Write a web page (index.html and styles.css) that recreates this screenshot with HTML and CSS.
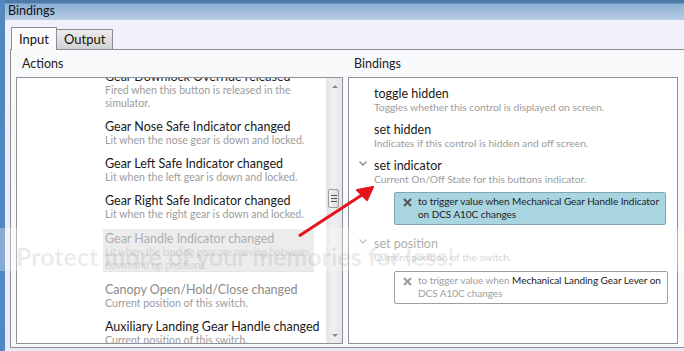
FILE: index.html
```html
<!DOCTYPE html>
<html lang="en">
<head>
  <meta charset="UTF-8">
  <title>Bindings</title>
  <link rel="stylesheet" href="styles.css">
</head>
<body>
  <div class="window">
    <div class="titlebar">Bindings</div>
    <div class="client">
      <div class="tabs">
        <div class="tab active">Input</div>
        <div class="tab">Output</div>
      </div>
      <div class="tabPanel">
        <div class="column">
          <div class="header">Actions</div>
          <div class="listbox">
            <div class="actionList">
              <div class="action">
                <div class="title">Gear Downlock Override released</div>
                <div class="desc">Fired when this button is released in the simulator.</div>
              </div>
              <div class="action">
                <div class="title">Gear Nose Safe Indicator changed</div>
                <div class="desc">Lit when the nose gear is down and locked.</div>
              </div>
              <div class="action">
                <div class="title">Gear Left Safe Indicator changed</div>
                <div class="desc">Lit when the left gear is down and locked.</div>
              </div>
              <div class="action">
                <div class="title">Gear Right Safe Indicator changed</div>
                <div class="desc">Lit when the right gear is down and locked.</div>
              </div>
              <div class="action selected">
                <div class="title">Gear Handle Indicator changed</div>
                <div class="desc">Lit when the landing gear are moving between down and up positions.</div>
              </div>
              <div class="action faded">
                <div class="title">Canopy Open/Hold/Close changed</div>
                <div class="desc">Current position of this switch.</div>
              </div>
              <div class="action">
                <div class="title">Auxiliary Landing Gear Handle changed</div>
                <div class="desc">Current position of this switch.</div>
              </div>
            </div>
            <div class="scrollbar">
              <div class="arrow up"></div>
              <div class="track">
                <div class="thumb"><span></span><span></span><span></span></div>
              </div>
              <div class="arrow down"></div>
            </div>
          </div>
        </div>
        <div class="column">
          <div class="header">Bindings</div>
          <div class="listbox bindingList">
            <div class="binding">
              <div class="title">toggle hidden</div>
              <div class="desc">Toggles whether this control is displayed on screen.</div>
            </div>
            <div class="binding">
              <div class="title">set hidden</div>
              <div class="desc">Indicates if this control is hidden and off screen.</div>
            </div>
            <div class="binding open">
              <svg class="chevron" width="8" height="5" viewBox="0 0 8 5"><polyline points="0.5,0.5 4,4 7.5,0.5" fill="none" stroke="#8a8a8a" stroke-width="1.3"/></svg>
              <div class="title">set indicator</div>
              <div class="desc">Current On/Off State for this buttons indicator.</div>
              <div class="trigger active">
                <svg class="remove" width="9" height="9" viewBox="0 0 9 9"><path d="M1 1 L8 8 M8 1 L1 8" stroke="#555" stroke-width="2"/></svg>
                <div class="triggerText">to trigger value when Mechanical Gear Handle Indicator on DCS A10C changes</div>
              </div>
            </div>
            <div class="binding open faded">
              <svg class="chevron" width="8" height="5" viewBox="0 0 8 5"><polyline points="0.5,0.5 4,4 7.5,0.5" fill="none" stroke="#a8a8a8" stroke-width="1.3"/></svg>
              <div class="title">set position</div>
              <div class="desc">Current position of the switch.</div>
              <div class="trigger">
                <svg class="remove" width="9" height="9" viewBox="0 0 9 9"><path d="M1 1 L8 8 M8 1 L1 8" stroke="#9a9a9a" stroke-width="2"/></svg>
                <div class="triggerText">to trigger value when <b>Mechanical Landing Gear Lever on</b> DCS A10C changes</div>
              </div>
            </div>
          </div>
        </div>
      </div>
    </div>

    <div class="watermark"><span>Protect more of your memories for less!</span></div>
    <svg class="pointer" width="684" height="351" viewBox="0 0 684 351">
      <line x1="299" y1="236" x2="368" y2="191" stroke="#e3141c" stroke-width="3"/>
      <polygon points="373,187 357,190 367,200" fill="#e3141c" stroke="#e3141c" stroke-width="2" stroke-linejoin="round"/>
    </svg>
  </div>
</body>
</html>
```

FILE: styles.css
```css
body{
  margin: 0;
  width: 684px;
  height: 351px;
  overflow: hidden;
  font-family: 'Lato', 'Open Sans', sans-serif;
  background: #eceaf7;
}

.window{
  position: relative;
  height: 351px;
  border-left: 5px solid #5288c0;
  box-sizing: border-box;
}

.titlebar{
  height: 20px;
  line-height: 22px;
  padding-left: 3px;
  font-size: 12.5px;
  color: #111;
  background: linear-gradient(#4d7aa9 0px, #4d7aa9 3px, #8db0d4 4px, #b9cde5 20px);
}

.client{
  padding: 7px 0 0 5px;
  background: linear-gradient(#f2f1fb, #ebe9f8);
}

.tabs{
  display: flex;
  align-items: flex-end;
  padding-left: 2px;
  height: 22px;
}

.tab{
  height: 19px;
  line-height: 19px;
  padding: 0 7px;
  font-size: 13px;
  color: #111;
  border: 1px solid #8a8d96;
  border-bottom: none;
  background: linear-gradient(#ececec, #d2d2d2);
  margin-left: -1px;
}

.tab.active{
  height: 22px;
  line-height: 22px;
  background: #fbfbfc;
  position: relative;
  z-index: 1;
  margin-bottom: -1px;
}

.tabPanel{
  display: flex;
  gap: 5px;
  width: 690px;
  height: 297px;
  padding: 0 5px 0 5px;
  border: 1px solid #8a8d96;
  background: #f8f9fa;
}

.column{
  display: flex;
  flex-direction: column;
}

.header{
  height: 27px;
  line-height: 28px;
  padding-left: 6px;
  font-size: 12.5px;
  color: #222;
}

.listbox{
  position: relative;
  height: 265px;
  border: 1px solid #8e9197;
  background: #fff;
  overflow: hidden;
  display: flex;
}

.column:first-child .listbox{
  width: 325px;
}

.bindingList{
  width: 330px;
  flex-direction: column;
  padding-top: 8px;
  box-sizing: border-box;
  height: 267px;
}

.actionList{
  flex: 1;
  padding-left: 86px;
  margin-top: -11px;
}

.action{
  width: 210px;
  padding: 2px 2px 0;
  margin-bottom: 7px;
}

.title{
  font-size: 12.5px;
  line-height: 15px;
  color: #1a1a1a;
  white-space: nowrap;
}

.desc{
  font-size: 10.3px;
  line-height: 13px;
  color: #9c9c9c;
}

.action .desc{
  font-size: 10.6px;
}

.action.selected{
  width: 207px;
  background: #e4e4e4;
  margin-top: 8px;
  margin-bottom: 8px;
}

.action.selected .title,
.action.faded .title{
  color: #8c8c8c;
}

.action.selected .desc{
  color: #c2c2c2;
  letter-spacing: -0.25px;
}

.scrollbar{
  width: 15px;
  display: flex;
  flex-direction: column;
  background: linear-gradient(90deg, #e3e3e3, #f0f0f0 40%, #e6e6e6);
  border-left: 1px solid #ececec;
}

.arrow{
  height: 16px;
  display: flex;
  align-items: center;
  justify-content: center;
}

.arrow::before{
  content: '';
  border-left: 3px solid transparent;
  border-right: 3px solid transparent;
}

.arrow.up::before{
  border-bottom: 3px solid #8a8a8a;
}

.arrow.down::before{
  border-top: 3px solid #8a8a8a;
}

.track{
  flex: 1;
  padding-top: 95px;
}

.thumb{
  width: 11px;
  height: 19px;
  margin-left: 1px;
  border: 1px solid #9c9c9c;
  border-radius: 2px;
  background: linear-gradient(90deg, #f4f4f4, #dcdcdc);
  display: flex;
  flex-direction: column;
  justify-content: center;
  align-items: center;
  gap: 2px;
  box-sizing: border-box;
}

.thumb span{
  width: 6px;
  height: 1px;
  background: #555;
}

.binding{
  position: relative;
  padding-left: 25px;
  margin-bottom: 8px;
}

.binding .desc{
  white-space: nowrap;
}

.chevron{
  position: absolute;
  left: 10px;
  top: 3px;
}

.binding.faded .title{
  color: #8c8c8c;
}

.binding.faded .desc{
  color: #c4c4c4;
}

.trigger{
  display: flex;
  align-items: flex-start;
  gap: 6px;
  width: 274px;
  margin: 6px 0 3px 20px;
  padding: 2px 4px 3px 8px;
  box-sizing: border-box;
  border: 1px solid #9aa0a6;
  border-radius: 2px;
  background: #fff;
}

.trigger.active{
  width: 272px;
  background: #a8d5e0;
  border-color: #7fa6b2;
}

.binding.faded .trigger{
  margin-top: 7px;
}

.remove{
  flex: none;
  margin-top: 3px;
}

.triggerText{
  font-size: 10px;
  line-height: 13px;
  letter-spacing: -0.05px;
  color: #222;
}

.binding.faded .triggerText{
  color: #a0a0a0;
}

.binding.faded .triggerText b{
  font-weight: normal;
  color: #222;
}

.watermark{
  position: absolute;
  left: -5px;
  top: 228px;
  width: 684px;
  height: 43px;
  background: rgba(255, 255, 255, 0.3);
  overflow: hidden;
}

.watermark span{
  position: absolute;
  left: 16px;
  top: 14px;
  font-size: 25px;
  line-height: 28px;
  font-weight: bold;
  color: rgba(130, 130, 130, 0.16);
  white-space: nowrap;
}

.pointer{
  position: absolute;
  left: -5px;
  top: 0;
}
```
